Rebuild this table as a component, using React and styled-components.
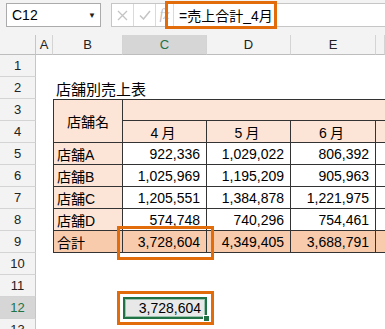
import React from 'react';
import styled, { createGlobalStyle } from 'styled-components';

const GlobalStyle = createGlobalStyle`
  html, body {
    margin: 0;
    padding: 0;
    overflow: hidden;
    background: #ffffff;
  }
  body {
    font-family: "Liberation Sans", "Noto Sans CJK JP", sans-serif;
  }
`;

const ORANGE = '#e36c0a';
const GREEN = '#217346';
const PEACH = '#fce4d6';
const PEACH_DARK = '#f8cbad';
const LINE = '#333333';

const COLUMNS = ['A', 'B', 'C', 'D', 'E', ''];

const stores = [
  { name: '店舗A', values: ['922,336', '1,029,022', '806,392'] },
  { name: '店舗B', values: ['1,025,969', '1,195,209', '905,963'] },
  { name: '店舗C', values: ['1,205,551', '1,384,878', '1,221,975'] },
  { name: '店舗D', values: ['574,748', '740,296', '754,461'] }
];
const totals = ['3,728,604', '4,349,405', '3,688,791'];

const Frame = styled.div`
  position: relative;
  width: 385px;
  height: 329px;
  overflow: hidden;
  background: #f3f3f3;
`;

const TopBar = styled.div`
  display: flex;
  align-items: flex-start;
  height: 35px;
  padding: 3px 0 0 6px;
  box-sizing: border-box;
  gap: 10px;
`;

const NameBox = styled.div`
  display: flex;
  align-items: center;
  justify-content: space-between;
  width: 95px;
  height: 24px;
  box-sizing: border-box;
  padding: 0 4px 0 5px;
  background: #fff;
  border: 1px solid #ababab;
  font-size: 14px;
  color: #000;
`;

const Arrow = styled.span`
  font-size: 8px;
  color: #222;
`;

const FormulaBar = styled.div`
  flex: 1;
  display: flex;
  height: 24px;
  box-sizing: border-box;
  background: #fff;
  border: 1px solid #c6c6c6;
  border-right: none;
`;

const FxButton = styled.div`
  display: flex;
  align-items: center;
  justify-content: center;
  width: ${p => p.$w || 21}px;
  border-right: 1px solid #dadada;
  color: #bdbdbd;
  font-family: "Liberation Serif", serif;
  font-style: italic;
  font-size: 14px;
`;

const FormulaInput = styled.div`
  display: flex;
  align-items: center;
  padding-left: 5px;
  font-size: 14px;
  color: #000;
`;

const Sheet = styled.div`
  display: grid;
  grid-template-columns: 36px 17px 70px 84px 84px 85px 1fr;
  grid-template-rows: 20px repeat(13, 22px);
  background: #fff;
  font-size: 14px;
  color: #000;
`;

const Corner = styled.div`
  grid-column: 1;
  grid-row: 1;
  background: #f3f3f3;
  border-right: 1px solid #c6c6c6;
  border-bottom: 1px solid #bdbdbd;
`;

const ColHeader = styled.div`
  grid-row: 1;
  grid-column: ${p => p.$col};
  display: flex;
  align-items: center;
  justify-content: center;
  box-sizing: border-box;
  background: ${p => (p.$active ? '#d6d6d6' : '#f3f3f3')};
  color: ${p => (p.$active ? GREEN : '#222')};
  border-right: 1px solid #d4d4d4;
  border-bottom: 1px solid #bdbdbd;
  font-size: 13px;
`;

const RowHeader = styled.div`
  grid-column: 1;
  grid-row: ${p => p.$row};
  display: flex;
  align-items: center;
  justify-content: center;
  box-sizing: border-box;
  background: ${p => (p.$active ? '#d6d6d6' : '#f3f3f3')};
  color: ${p => (p.$active ? GREEN : '#222')};
  border-right: 1px solid #c6c6c6;
  border-bottom: 1px solid #d4d4d4;
  font-size: 13px;
`;

const Title = styled.div`
  grid-column: 3 / span 2;
  grid-row: 3;
  display: flex;
  align-items: center;
  padding-left: 3px;
  font-size: 15px;
  white-space: nowrap;
`;

const Cell = styled.div`
  grid-column: ${p => p.$col};
  grid-row: ${p => p.$row};
  display: flex;
  align-items: center;
  justify-content: ${p => p.$align || 'flex-end'};
  box-sizing: border-box;
  padding: ${p => (p.$align === 'flex-start' ? '0 0 0 3px' : p.$align === 'center' ? '0' : '0 6px 0 0')};
  background: ${p => p.$fill || '#fff'};
  border-bottom: 1px solid ${LINE};
  border-right: ${p => (p.$open ? 'none' : `1px solid ${LINE}`)};
  border-left: ${p => (p.$first ? `1px solid ${LINE}` : 'none')};
  border-top: ${p => (p.$top ? `1px solid ${LINE}` : 'none')};
  white-space: nowrap;
  overflow: hidden;
`;

const MonthLabel = styled.span`
  letter-spacing: 3px;
`;

const SelectedCell = styled.div`
  grid-column: 4;
  grid-row: 13;
  position: relative;
  display: flex;
  align-items: center;
  justify-content: flex-end;
  padding-right: 6px;
  background: #e8e8e8;
  box-shadow: inset 0 0 0 2px ${GREEN}, inset 0 0 0 3px #9cc3ad;
`;

const FillHandle = styled.span`
  position: absolute;
  right: -3px;
  bottom: -3px;
  width: 5px;
  height: 5px;
  background: ${GREEN};
  border: 1px solid #fff;
`;

const Callout = styled.div`
  position: absolute;
  left: ${p => p.$x}px;
  top: ${p => p.$y}px;
  width: ${p => p.$w}px;
  height: ${p => p.$h}px;
  box-sizing: border-box;
  border: 3px solid ${ORANGE};
  pointer-events: none;
`;

const Cross = () => (
  <svg width="11" height="11" viewBox="0 0 11 11">
    <path d="M1 1 L10 10 M10 1 L1 10" stroke="#c4c4c4" strokeWidth="1.3" fill="none" />
  </svg>
);

const Check = () => (
  <svg width="12" height="10" viewBox="0 0 12 10">
    <path d="M1 5.5 L4.5 9 L11 1" stroke="#c4c4c4" strokeWidth="1.5" fill="none" />
  </svg>
);

export default function App() {
  const rows = Array.from({ length: 13 }, (_, i) => i + 1);

  return (
    <Frame>
      <GlobalStyle />
      <TopBar>
        <NameBox>
          <span>C12</span>
          <Arrow>▼</Arrow>
        </NameBox>
        <FormulaBar>
          <FxButton><Cross /></FxButton>
          <FxButton><Check /></FxButton>
          <FxButton $w={17}>fx</FxButton>
          <FormulaInput>=売上合計_4月</FormulaInput>
        </FormulaBar>
      </TopBar>

      <Sheet>
        <Corner />
        {COLUMNS.map((c, i) => (
          <ColHeader key={i} $col={i + 2} $active={c === 'C'}>{c}</ColHeader>
        ))}
        {rows.map(r => (
          <RowHeader key={r} $row={r + 1} $active={r === 12}>{r}</RowHeader>
        ))}

        <Title>店舗別売上表</Title>

        {/* header rows 3-4 */}
        <Cell $col={3} $row="4 / span 2" $fill={PEACH} $align="center" $first $top>店舗名</Cell>
        <Cell $col="4 / span 4" $row={4} $fill={PEACH} $top $open />
        {['4月', '5月', '6月'].map((m, i) => (
          <Cell key={m} $col={i + 4} $row={5} $fill={PEACH} $align="center">
            <MonthLabel>{m}</MonthLabel>
          </Cell>
        ))}
        <Cell $col={7} $row={5} $fill={PEACH} $open />

        {/* store rows 5-8 */}
        {stores.map((s, i) => (
          <React.Fragment key={s.name}>
            <Cell $col={3} $row={i + 6} $fill={PEACH} $align="flex-start" $first>{s.name}</Cell>
            {s.values.map((v, j) => (
              <Cell key={j} $col={j + 4} $row={i + 6}>{v}</Cell>
            ))}
            <Cell $col={7} $row={i + 6} $open />
          </React.Fragment>
        ))}

        {/* total row 9 */}
        <Cell $col={3} $row={10} $fill={PEACH_DARK} $align="flex-start" $first>合計</Cell>
        {totals.map((v, j) => (
          <Cell key={j} $col={j + 4} $row={10} $fill={PEACH_DARK}>{v}</Cell>
        ))}
        <Cell $col={7} $row={10} $fill={PEACH_DARK} $open />

        <SelectedCell>
          3,728,604
          <FillHandle />
        </SelectedCell>
      </Sheet>

      <Callout $x={165} $y={1} $w={112} $h={28} />
      <Callout $x={117} $y={226} $w={97} $h={34} />
      <Callout $x={117} $y={291} $w={97} $h={34} />
    </Frame>
  );
}
